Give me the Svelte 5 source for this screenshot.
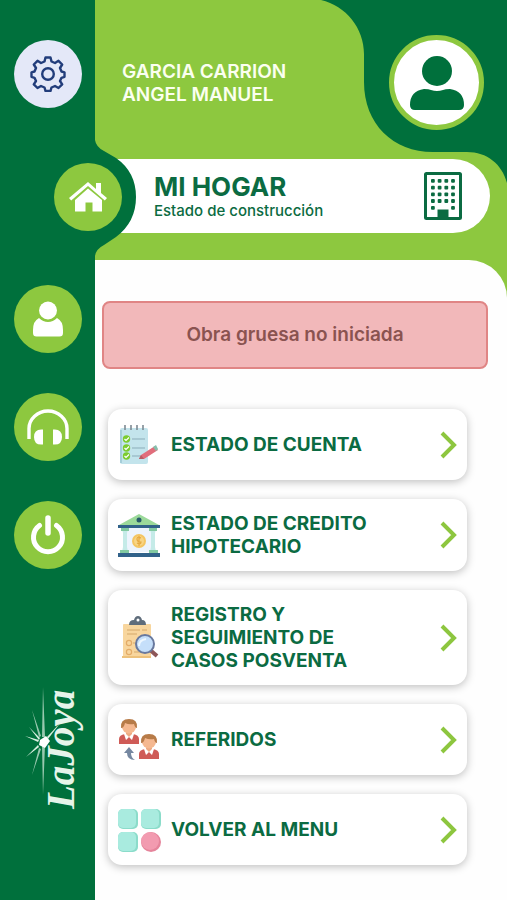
<script>
  const user = { lastName: 'GARCIA CARRION', firstName: 'ANGEL MANUEL' };

  const options = [
    { icon: 'checklist', label: 'ESTADO DE CUENTA' },
    { icon: 'bank', label: 'ESTADO DE CREDITO HIPOTECARIO' },
    { icon: 'search', label: 'REGISTRO Y SEGUIMIENTO DE CASOS POSVENTA' },
    { icon: 'referrals', label: 'REFERIDOS' },
    { icon: 'menu', label: 'VOLVER AL MENU' },
  ];
</script>

{#snippet worker()}
  <path d="M0 25v-5q0-4 6-5l4 3 4-3q6 1 6 5v5z" fill="#cf5b57" />
  <path d="M5 15l5-2 5 2-2 6-3-3-3 3z" fill="#fff" />
  <path d="M7 11h6v4l-3 3-3-3z" fill="#eda982" />
  <ellipse cx="10" cy="8" rx="7" ry="6.500" fill="#f5b890" />
  <path d="M2 9q-1-9 8-9 9 0 8 9-2 0-3-4-5 1-9-1-1 5-4 5z" fill="#b77b48" />
{/snippet}

<div class="page">
  <aside class="sidebar">
    <nav class="nav">
      <button class="round settings" aria-label="Configuración">
        <svg viewBox="0 0 36 36" width="36" height="36" fill="none" stroke="#223d7b" stroke-width="2.400" stroke-linejoin="round">
          <path d="M15.500 1.500h5l1 4 3.500 1.500 3.500-2.200 3.700 3.700L30 12l1.500 3.500 3 .8v4.500l-3 1L30 25l2.200 3.300-3.700 3.700-3.500-2-3.500 1.500-1 3.500h-5l-1-3.500L11 30l-3.500 2-3.700-3.700L6 25l-1.500-3.200-3-1v-4.500l3-.8L6 12 3.800 8.500l3.700-3.700L11 7l3.500-1.500z" />
          <circle cx="18" cy="18" r="5.800" />
        </svg>
      </button>
      <div class="active">
        <svg class="bump" viewBox="0 0 41 116" width="41" height="116" aria-hidden="true">
          <path d="M0 0Q1 7 9 11L21 18Q41 32 41 57T21 97L9 105Q1 109 0 116Z" fill="#00703c" />
        </svg>
        <button class="round" aria-label="Mi hogar">
          <svg viewBox="0 0 38 32" width="38" height="32" fill="#fff">
            <path d="M19 1 27 8V2h5v10l6 5-2.200 2.500L19 5 2.200 19.500 0 17z" />
            <path d="M19 7.500 33 19v11.500h-9.500v-9h-7v9H6V19z" />
          </svg>
        </button>
      </div>
      <button class="round" aria-label="Perfil">
        <svg viewBox="0 0 30 36" width="30" height="36" fill="#fff">
          <circle cx="15" cy="9.500" r="9" />
          <path d="M6 17q4 4 9 4t9-4q6 3 6 12v3q0 3.500-3.500 3.500h-23Q0 35.500 0 32v-3Q0 20 6 17z" />
        </svg>
      </button>
      <button class="round" aria-label="Soporte">
        <svg viewBox="0 0 42 36" width="42" height="36" fill="#fff">
          <path d="M2 30V19.500a19 17.500 0 0 1 38 0V30" fill="none" stroke="#fff" stroke-width="3.400" />
          <path d="M16 20.500v15q-9 1-9-7.500t9-7.500zM26 20.500v15q9 1 9-7.500t-9-7.500z" />
        </svg>
      </button>
      <button class="round" aria-label="Salir">
        <svg viewBox="0 0 36 40" width="36" height="40" fill="none" stroke="#fff" stroke-width="5" stroke-linecap="round">
          <path d="M9.500 10.500a14.500 14.500 0 1 0 17 0" />
          <path d="M18 3v15" stroke-width="5.500" />
        </svg>
      </button>
    </nav>

    <svg class="logo" viewBox="0 0 70 130" width="70" height="130" role="img" aria-label="La Joya">
      <text class="brand" transform="translate(52 126) rotate(-90)">LaJoya</text>
      <g fill="#d9eee0">
        <path d="M21 4l2 50h-3zM21 112l2-50h-3z" opacity=".7" />
        <path d="M10 27l9 26-2 1zM10 92l9-26-2-1z" opacity=".7" />
        <path d="M3 53l14 4-1 2zM7 44l11 11-1 2zM4 74l13-10-1-2z" />
        <path d="M39 39L25 54l1 2z" />
        <path d="M18 57l6-4 4 5-5 7-6-3z" fill="#fff" />
      </g>
    </svg>
  </aside>

  <div class="content">
    <header class="header">
      <svg class="corner" viewBox="0 0 192 190" width="192" height="190" aria-hidden="true">
        <path d="M6 0C31 6 49 28 49 54V82C49 124 78 152 118 152H152C172 152 187 164 192 183V0Z" fill="#00703c" />
      </svg>

      <div class="user">
        <p class="name">{user.lastName}<br />{user.firstName}</p>
        <div class="avatar">
          <svg viewBox="0 0 54 54" width="54" height="54" fill="#00703c">
            <circle cx="27" cy="15" r="15" />
            <path d="M14 33q5 0 7 1 6 2 12 0 2-1 7-1 14 2 14 16 0 5-5 5H5q-5 0-5-5 0-14 14-16z" />
          </svg>
        </div>
      </div>

      <div class="title">
        <div>
          <h1>MI HOGAR</h1>
          <p>Estado de construcción</p>
        </div>
        <svg viewBox="0 0 38 48" width="38" height="48" fill="#0b6b42">
          <rect x="1.500" y="1.500" width="35" height="45" rx="1" fill="none" stroke="#0b6b42" stroke-width="3" />
          {#each [7, 13.700, 20.400, 27.100] as x}
            {#each [7, 13.700, 20.400, 27.100] as y}
              <rect {x} {y} width="3.800" height="3.800" rx="1" />
            {/each}
          {/each}
          <rect x="7" y="34" width="3.800" height="3.800" rx="1" />
          <rect x="27.100" y="34" width="3.800" height="3.800" rx="1" />
          <path d="M13.500 37.500h11V47h-11z" />
        </svg>
      </div>
    </header>

    <main class="panel">
      <p class="alert" role="status">Obra gruesa no iniciada</p>

      <div class="options">
        {#each options as option}
          <button class="option">
            <svg class="icon" viewBox="0 0 44 44" width="44" height="44" aria-hidden="true">
              {#if option.icon === 'checklist'}
                <rect x="3" y="5" width="28" height="36" rx="2" fill="#c3e4ec" />
                <path d="M4 40V7" stroke="#a6ced9" stroke-width="2" />
                <path d="M8 2v5M14 2v5M20 2v5M26 2v5" stroke="#7d8a93" stroke-width="1.600" />
                {#each [16, 25, 33] as y}
                  <circle cx="9.500" cy={y} r="3.700" fill="#7ccc2f" />
                  <path d="M7.500 {y}l1.500 1.500 3-3" fill="none" stroke="#fff" stroke-width="1.200" />
                  <path d="M15 {y}h13" stroke="#8badb9" stroke-width="1" />
                {/each}
                <path d="M22 36l2-4 14-9 3 4-14 9z" fill="#e16d7b" />
                <path d="M36 24l3-2 2 4-2 2z" fill="#85bfac" />
                <path d="M22 36l2-4 3 4z" fill="#b75c62" />
              {:else if option.icon === 'bank'}
                <path d="M22 1l20 11v2H2v-2z" fill="#9bd99a" />
                <circle cx="22" cy="7" r="2.500" fill="#285b6b" />
                <rect x="9" y="15" width="26" height="24" fill="#edf4fd" />
                <path d="M5 16h6l-1 4v14l1 5H5l1-5V20zM33 16h6l-1 4v14l1 5h-6l1-5V20z" fill="#c5ebe8" />
                <path d="M4 15h8v3H4zM32 15h8v3h-8zM3 37h9v3H3zM32 37h9v3h-9z" fill="#82c9a1" />
                <path d="M1 12h42v3H1zM1 40h42v4H1z" fill="#31628a" />
                <circle cx="22" cy="28" r="7" fill="#f4c562" />
                <circle cx="22" cy="28" r="5" fill="#f8d585" />
                <path d="M24 25q-4-2-4 1t4 3q0 3-4 1M22 23v10" fill="none" stroke="#e5a840" stroke-width="1.200" />
              {:else if option.icon === 'search'}
                <rect x="6" y="8" width="28" height="34" rx="1" fill="#f8d69e" />
                <path d="M5 40h29v2H5z" fill="#edc17b" />
                <path d="M12 9q0-5 5-5 1-4 4-4t4 4q4 0 4 5z" fill="#5f6d7b" />
                <circle cx="21" cy="4" r="1.500" fill="#fff" />
                <path d="M10 14h13M10 18h10M25 14h5M16 27h5M17 36h7" stroke="#d3a86b" stroke-width="1.200" />
                <circle cx="12" cy="27" r="2.600" fill="none" stroke="#e3ac68" stroke-width="1.200" />
                <circle cx="12" cy="36" r="2.600" fill="none" stroke="#e3ac68" stroke-width="1.200" />
                <path d="M32 33l8 7" stroke="#8d5658" stroke-width="4" />
                <circle cx="28" cy="28" r="9" fill="#c5dffa" stroke="#69799e" stroke-width="2" />
                <path d="M22 30q0-6 7-7" fill="none" stroke="#edf7ff" stroke-width="2" />
              {:else if option.icon === 'referrals'}
                <g transform="translate(2 1)">{@render worker()}</g>
                <g transform="translate(22 16)">{@render worker()}</g>
                <path d="M7 35l5-6 5 6h-3q0 5 4 7-8 0-8-7z" fill="#7587a0" />
              {:else}
                <g fill="#8bdcca">
                  <rect x="1" y="1" width="20" height="20" rx="5" />
                  <rect x="24" y="1" width="20" height="20" rx="5" />
                  <rect x="1" y="24" width="20" height="20" rx="5" />
                </g>
                <g fill="#a9ebdf">
                  <rect x="1" y="1" width="18" height="19" rx="5" />
                  <rect x="24" y="1" width="18" height="19" rx="5" />
                  <rect x="1" y="24" width="18" height="19" rx="5" />
                </g>
                <circle cx="34" cy="34" r="10" fill="#e5849b" />
                <circle cx="33" cy="33" r="9" fill="#f29bb0" />
              {/if}
            </svg>
            <span class="label">{option.label}</span>
            <svg class="chevron" viewBox="0 0 17 28" width="17" height="28" aria-hidden="true">
              <path d="M2 2l12 12L2 26" fill="none" stroke="#8dc63f" stroke-width="4" />
            </svg>
          </button>
        {/each}
      </div>
    </main>
  </div>
</div>

<style>
  :global(body) {
    margin: 0;
    background: #8dc83f;
  }

  .page {
    display: flex;
    min-height: 100vh;
    font-family: Inter, "Liberation Sans", sans-serif;
    color: #0b6b42;
  }

  h1,
  p {
    margin: 0;
  }

  button {
    border: 0;
    padding: 0;
    font: inherit;
    color: inherit;
    cursor: pointer;
  }

  svg {
    display: block;
    flex: none;
  }

  .sidebar {
    position: relative;
    z-index: 1;
    flex: none;
    width: 95px;
    box-sizing: border-box;
    padding-top: 40px;
    background: #00703c;
  }

  .nav {
    display: flex;
    flex-direction: column;
    align-items: center;
    gap: 40px;
  }

  .round {
    position: relative;
    display: flex;
    align-items: center;
    justify-content: center;
    width: 68px;
    height: 68px;
    border-radius: 50%;
    background: #8dc83f;
  }

  .settings {
    background: #e4e8f8;
  }

  .active {
    position: relative;
    align-self: flex-start;
    margin: 15px 0 14px 54px;
  }

  /* bulge of the sidebar around the current section */
  .bump {
    position: absolute;
    top: -23px;
    left: 41px;
  }

  .logo {
    margin: 114px 0 0 22px;
  }

  .brand {
    font-family: "Liberation Serif", serif;
    font-style: italic;
    font-weight: 700;
    font-size: 39px;
    fill: #e6f4ea;
  }

  .content {
    display: flex;
    flex-direction: column;
    flex: 1;
    min-width: 0;
    background: #8dc83f;
  }

  .header {
    position: relative;
    padding: 35px 0 27px;
  }

  .corner {
    position: absolute;
    top: 0;
    right: 0;
  }

  .user {
    position: relative;
    display: flex;
    align-items: center;
    justify-content: space-between;
    padding: 0 23px 0 27px;
  }

  .name {
    font-size: 19px;
    font-weight: 600;
    line-height: 23px;
    color: #fbfff0;
  }

  .avatar {
    display: flex;
    align-items: center;
    justify-content: center;
    width: 85px;
    height: 85px;
    border: 5px solid #8dc83f;
    border-radius: 50%;
    background: #fff;
  }

  .title {
    position: relative;
    display: flex;
    align-items: center;
    justify-content: space-between;
    margin: 29px 17px 0 20px;
    padding: 13px 28px 13px 39px;
    border-radius: 0 38px 38px 0;
    background: #fff;
  }

  h1 {
    font-size: 26px;
    font-weight: 700;
    line-height: 30px;
  }

  .title p {
    font-size: 15px;
    font-weight: 500;
    line-height: 18px;
  }

  .panel {
    flex: 1;
    padding: 41px 19px 35px 7px;
    border-top-right-radius: 38px;
    background: #fefefe;
  }

  .alert {
    padding: 22px 16px;
    border: 2px solid #e08585;
    border-radius: 8px;
    background: #f2b8ba;
    font-size: 19px;
    font-weight: 600;
    line-height: 20px;
    text-align: center;
    color: #8a5350;
  }

  .options {
    display: flex;
    flex-direction: column;
    gap: 19px;
    margin: 40px 21px 0 6px;
  }

  .option {
    display: flex;
    align-items: center;
    min-height: 71px;
    padding: 13px 10px 13px 9px;
    border-radius: 14px;
    background: #fff;
    box-shadow: 0 2px 8px rgba(0, 0, 0, 0.25);
    text-align: left;
  }

  .label {
    flex: 1;
    padding: 0 56px 0 10px;
    font-size: 19px;
    font-weight: 700;
    line-height: 23px;
  }
</style>
